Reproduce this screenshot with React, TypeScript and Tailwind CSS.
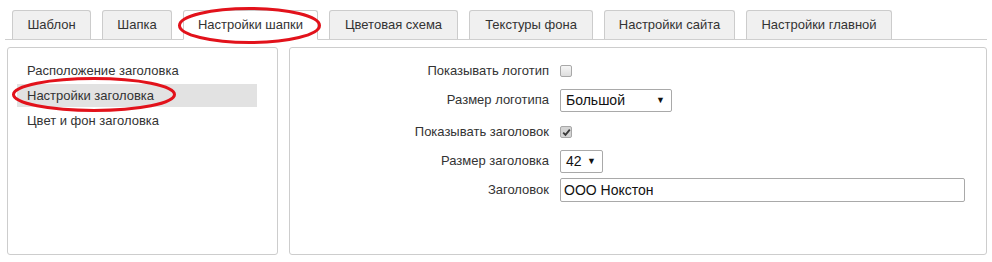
import React from "react";

const tabs = [
  { label: "Шаблон", w: 79 },
  { label: "Шапка", w: 70 },
  { label: "Настройки шапки", w: 135, active: true },
  { label: "Цветовая схема", w: 129 },
  { label: "Текстуры фона", w: 124 },
  { label: "Настройки сайта", w: 131 },
  { label: "Настройки главной", w: 146 },
];

function Checkbox({ checked }: { checked?: boolean }) {
  return (
    <div
      className={
        "w-[12px] h-[12px] rounded-[2px] border border-[#a8a8a8] flex items-center justify-center " +
        (checked ? "bg-[#d4d4d4]" : "bg-gradient-to-b from-[#f6f6f6] to-[#dedede]")
      }
    >
      {checked && (
        <svg width="9" height="9" viewBox="0 0 9 9">
          <path d="M1.2 4.6 L3.5 6.9 L7.8 1.6" fill="none" stroke="#3a3a3a" strokeWidth="1.8" />
        </svg>
      )}
    </div>
  );
}

function Select({ value, w }: { value: string; w: number }) {
  return (
    <div
      className="h-[23px] border border-[#a9a9a9] rounded-[2px] bg-white flex items-center justify-between pl-[5px] pr-[6px] text-[14px] text-[#111]"
      style={{ width: w }}
    >
      <span>{value}</span>
      <span className="text-[9px] leading-none">▼</span>
    </div>
  );
}

export default function App() {
  return (
    <div
      className="relative w-[992px] h-[262px] bg-white text-[13px] text-[#333] overflow-hidden"
      style={{ fontFamily: '"Liberation Sans", Arial, sans-serif' }}
    >
      {/* Tabs */}
      <div className="pt-[10px] mx-[5px] w-[982px] border-b border-[#cfcfcf] flex pl-[7px] gap-[11px] h-[40px]">
        {tabs.map((t) => (
          <div
            key={t.label}
            className={
              "border border-[#cccccc] rounded-t-[3px] flex items-center justify-center " +
              (t.active ? "bg-white border-b-white h-[30px] relative z-10" : "bg-[#f0f0f0] border-b-0 h-[29px]")
            }
            style={{ width: t.w }}
          >
            {t.label}
          </div>
        ))}
      </div>

      {/* Panels */}
      <div className="flex gap-[11px] pl-[7px] pt-[7px]">
        <div className="w-[271px] h-[208px] border border-[#cdcdcd] rounded-[3px] pt-[11px] pl-[9px] pr-[20px]">
          <div className="h-[24px] flex items-center pl-[10px]">Расположение заголовка</div>
          <div className="h-[23px] mt-[1px] flex items-center pl-[10px] bg-[#e2e2e2]">Настройки заголовка</div>
          <div className="h-[24px] mt-[1px] pt-[2px] flex items-center pl-[10px]">Цвет и фон заголовка</div>
        </div>

        <div className="w-[698px] h-[208px] border border-[#cdcdcd] rounded-[3px] pt-[11px]">
          <div className="flex items-center h-[24px]">
            <div className="w-[259px] text-right">Показывать логотип</div>
            <div className="ml-[11px]">
              <Checkbox />
            </div>
          </div>
          <div className="flex items-center h-[24px] mt-[5px]">
            <div className="w-[259px] text-right">Размер логотипа</div>
            <div className="ml-[11px]">
              <Select value="Большой" w={112} />
            </div>
          </div>
          <div className="flex items-center h-[24px] mt-[8px]">
            <div className="w-[259px] text-right">Показывать заголовок</div>
            <div className="ml-[11px]">
              <Checkbox checked />
            </div>
          </div>
          <div className="flex items-center h-[24px] mt-[5px]">
            <div className="w-[259px] text-right">Размер заголовка</div>
            <div className="ml-[11px]">
              <Select value="42" w={43} />
            </div>
          </div>
          <div className="flex items-center h-[24px] mt-[5px]">
            <div className="w-[259px] text-right">Заголовок</div>
            <div className="ml-[11px] w-[405px] h-[24px] border border-[#a9a9a9] rounded-[2px] flex items-center pl-[3px] text-[14px] text-[#111]">
              ООО Нокстон
            </div>
          </div>
        </div>
      </div>

      {/* Annotation ellipses */}
      <svg className="absolute left-0 top-0 pointer-events-none z-20" width="992" height="262">
        <ellipse cx="249.5" cy="25.5" rx="70" ry="17" fill="none" stroke="#e2121b" strokeWidth="3" />
        <ellipse cx="94" cy="94.5" rx="80.5" ry="16" fill="none" stroke="#e2121b" strokeWidth="3" />
      </svg>
    </div>
  );
}
